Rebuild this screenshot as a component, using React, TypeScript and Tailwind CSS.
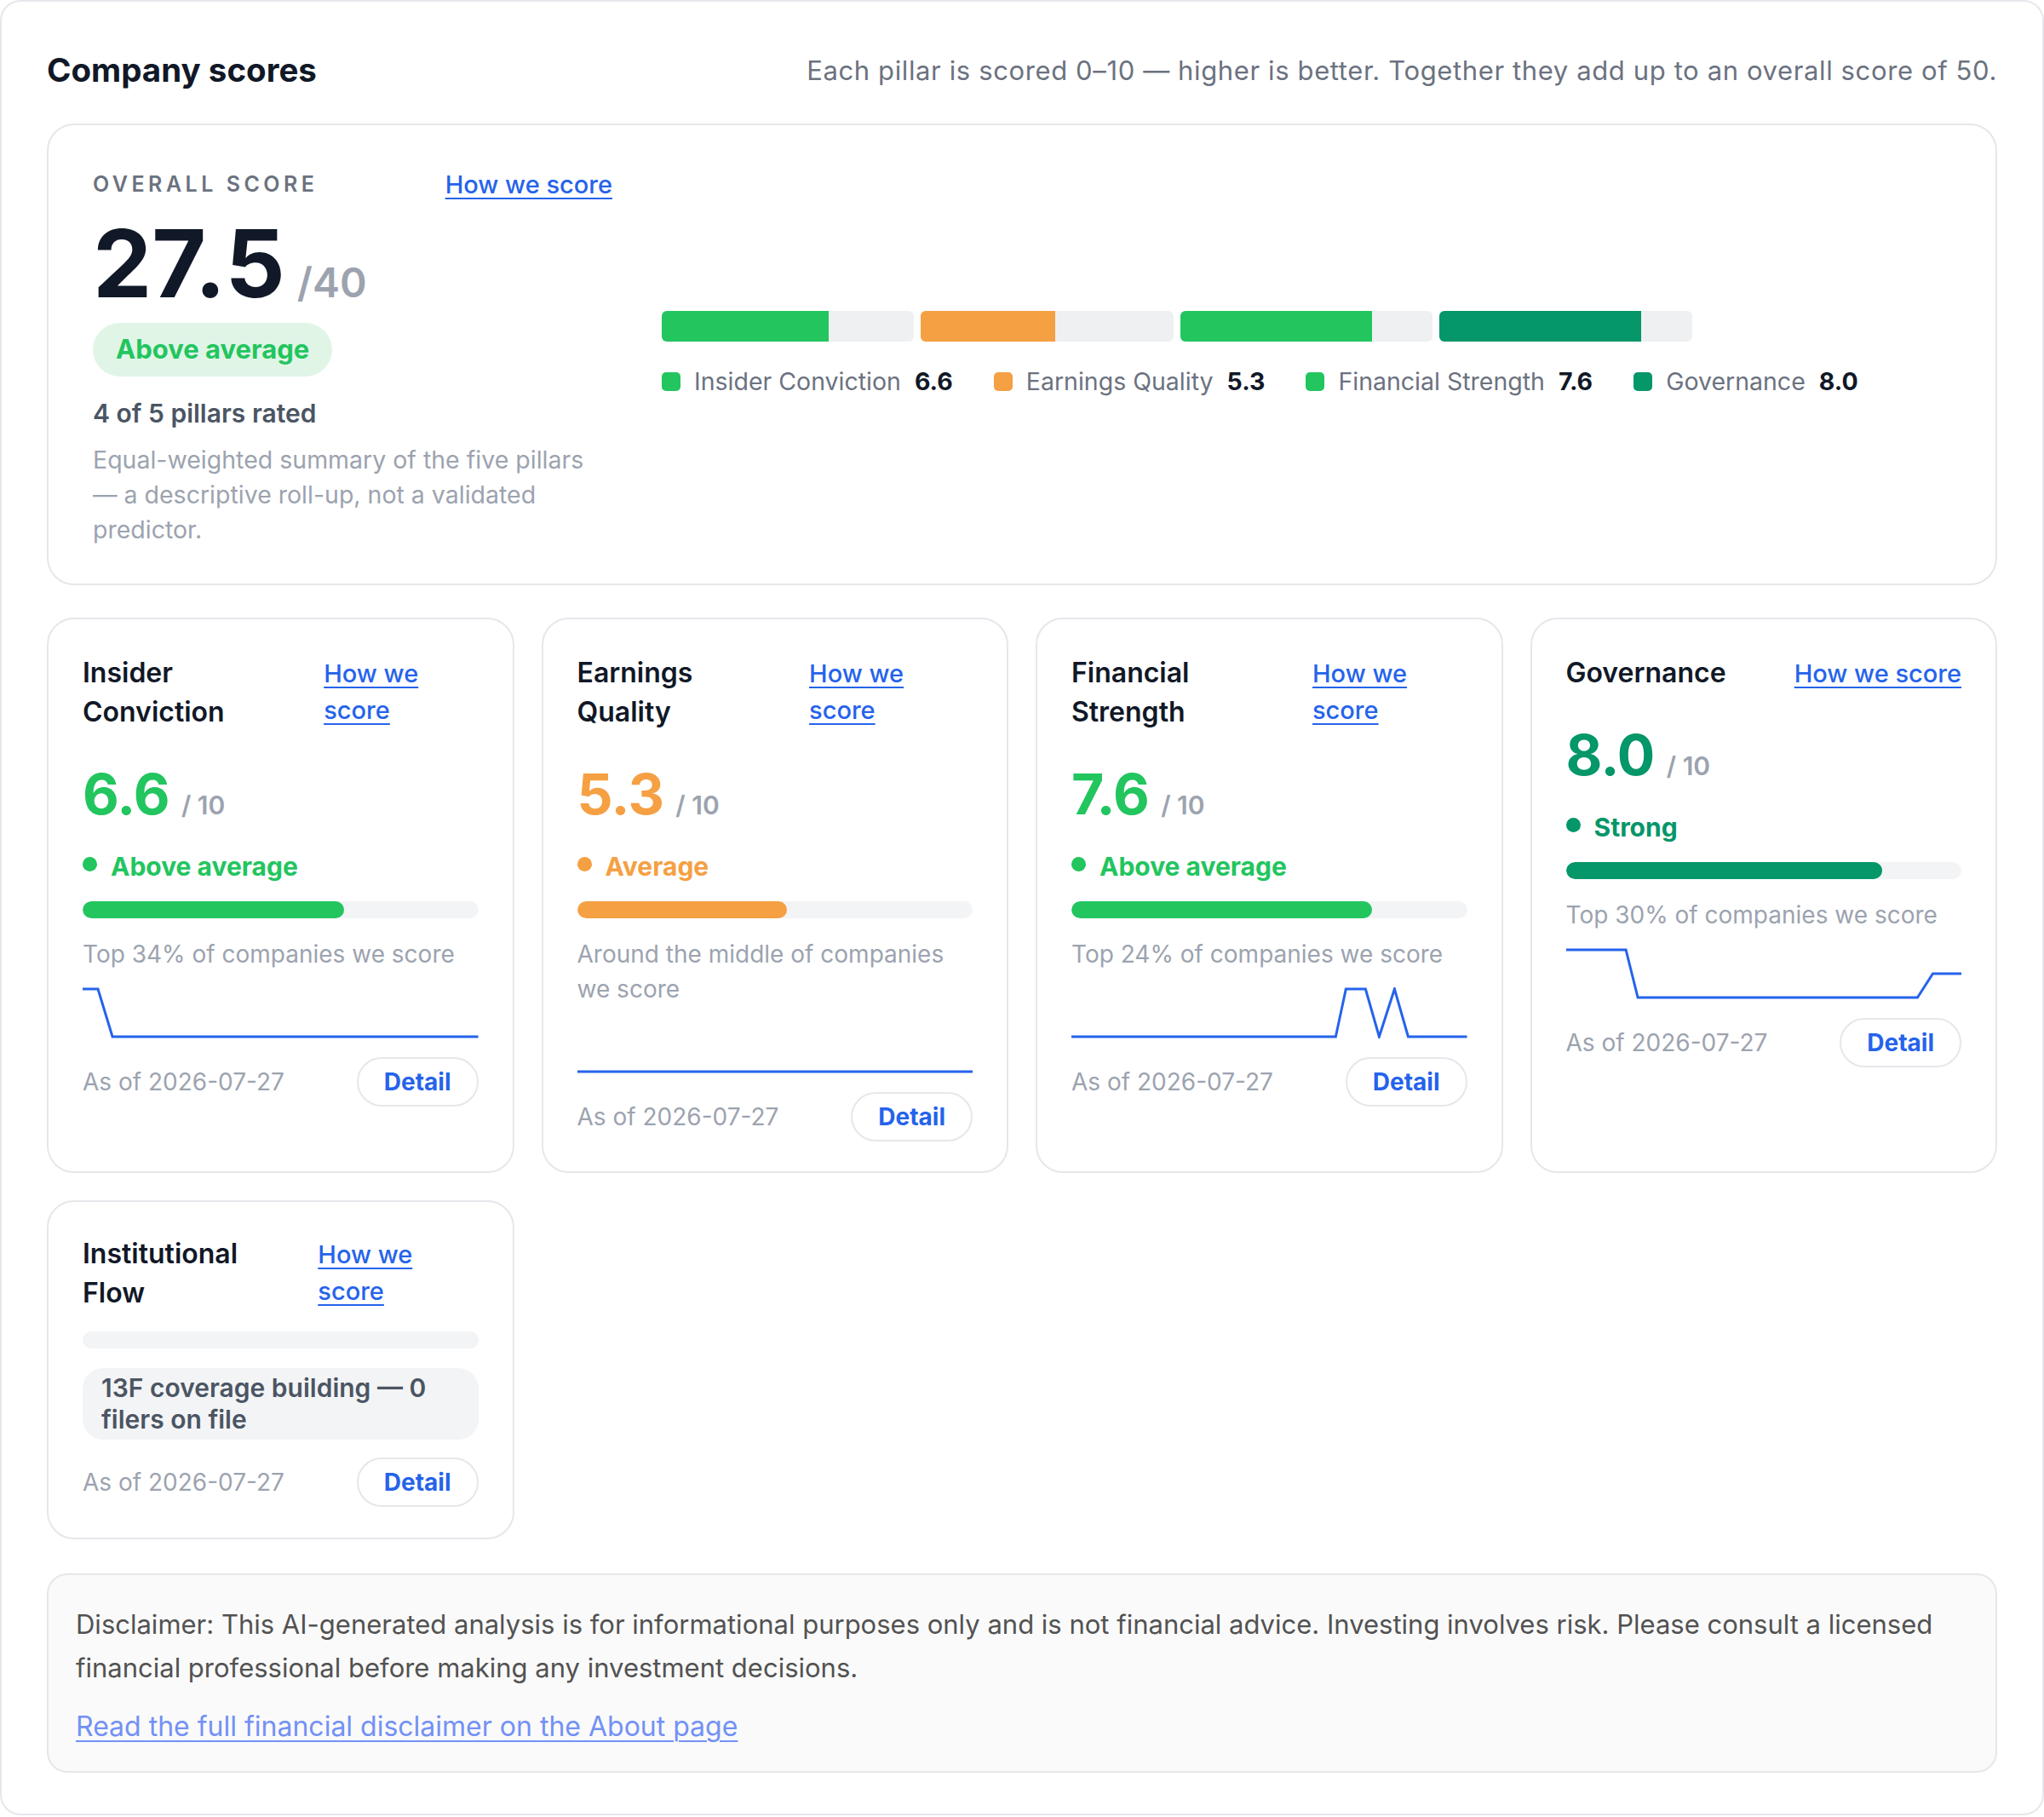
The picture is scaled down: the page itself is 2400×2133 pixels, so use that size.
import React from 'react';

type Pillar = {
  name: string;
  score: string;
  value: number;
  status: string;
  text: string;
  bg: string;
  note: string;
  points: string;
};

const pillars: Pillar[] = [
  {
    name: 'Insider Conviction',
    score: '6.6',
    value: 6.6,
    status: 'Above average',
    text: 'text-[#22c55e]',
    bg: 'bg-[#22c55e]',
    note: 'Top 34% of companies we score',
    points: '0,2 18,2 35,58 464,58',
  },
  {
    name: 'Earnings Quality',
    score: '5.3',
    value: 5.3,
    status: 'Average',
    text: 'text-[#f5a043]',
    bg: 'bg-[#f5a043]',
    note: 'Around the middle of companies we score',
    points: '0,58 464,58',
  },
  {
    name: 'Financial Strength',
    score: '7.6',
    value: 7.6,
    status: 'Above average',
    text: 'text-[#22c55e]',
    bg: 'bg-[#22c55e]',
    note: 'Top 24% of companies we score',
    points: '0,58 310,58 322,2 345,2 361,58 379,2 395,58 464,58',
  },
  {
    name: 'Governance',
    score: '8.0',
    value: 8.0,
    status: 'Strong',
    text: 'text-[#059669]',
    bg: 'bg-[#059669]',
    note: 'Top 30% of companies we score',
    points: '0,2 70,2 84,58 412,58 430,30 464,30',
  },
];

const HowWeScore = () => (
  <a
    href="#"
    className="mt-[2px] text-[29px] font-medium leading-[43px] text-[#2563eb] underline decoration-[2px] underline-offset-[5px]"
  >
    How we score
  </a>
);

const CardFooter = () => (
  <div className="flex items-center justify-between">
    <span className="text-[28px] text-[#9ca3af]">As of 2026-07-27</span>
    <button className="rounded-full border-2 border-[#e5e7eb] bg-white px-[30px] py-[7px] text-[28px] font-bold leading-[40px] text-[#2563eb]">
      Detail
    </button>
  </div>
);

const PillarCard = ({ p }: { p: Pillar }) => (
  <div className="flex flex-col rounded-[32px] border-2 border-[#e5e7eb] bg-white px-[40px] pb-[35px] pt-[40px]">
    <div className="flex items-start justify-between gap-[24px]">
      <h3 className="text-[32px] font-semibold leading-[46px] text-[#111827]">{p.name}</h3>
      <HowWeScore />
    </div>

    <div className="mt-[40px] flex items-baseline gap-[14px]">
      <span className={`text-[66px] font-bold leading-none tracking-[-0.01em] ${p.text}`}>{p.score}</span>
      <span className="text-[30px] font-semibold text-[#9ca3af]">/ 10</span>
    </div>

    <div className="mt-[28px] flex h-[42px] items-center gap-[16px]">
      <span className={`h-[17px] w-[17px] -translate-y-[3px] rounded-full ${p.bg}`} />
      <span className={`text-[30px] font-bold ${p.text}`}>{p.status}</span>
    </div>

    <div className="mt-[20px] h-[20px] overflow-hidden rounded-full bg-[#f3f4f6]">
      <div className={`h-full rounded-full ${p.bg}`} style={{ width: `${p.value * 10}%` }} />
    </div>

    <p className="mt-[22px] text-[28px] leading-[41px] text-[#9ca3af]">{p.note}</p>

    <svg className="mt-[18px] h-[60px] w-full" viewBox="0 0 464 60" preserveAspectRatio="none">
      <polyline
        points={p.points}
        fill="none"
        stroke="#2563eb"
        strokeWidth={3}
        vectorEffect="non-scaling-stroke"
      />
    </svg>

    <div className="mt-[22px]">
      <CardFooter />
    </div>
  </div>
);

const App = () => {
  return (
    <div className="min-h-screen bg-white font-[Inter,sans-serif]">
      <div className="flex flex-col rounded-[24px] border-2 border-[#e5e7eb] bg-white px-[53px] pb-[48px] pt-[52px]">
        {/* header */}
        <div className="flex h-[58px] items-center justify-between">
          <h2 className="text-[38.5px] font-bold text-[#111827]">Company scores</h2>
          <p className="text-[31px] tracking-[0.02em] text-[#6b7280]">
            Each pillar is scored 0–10 — higher is better. Together they add up to an overall score of 50.
          </p>
        </div>

        {/* overall */}
        <div className="mt-[33px] flex items-center gap-[58px] rounded-[32px] border-2 border-[#e5e7eb] bg-white pb-[43px] pl-[52px] pr-[52px] pt-[50px]">
          <div className="flex w-[610px] shrink-0 flex-col">
            <div className="flex h-[40px] items-center justify-between">
              <span className="text-[25px] font-semibold tracking-[0.18em] text-[#6b7280]">OVERALL SCORE</span>
              <a
                href="#"
                className="text-[29px] font-medium text-[#2563eb] underline decoration-[2px] underline-offset-[5px]"
              >
                How we score
              </a>
            </div>
            <div className="mt-[17px] flex items-baseline gap-[14px]">
              <span className="text-[110px] font-bold leading-none text-[#111827]">27.5</span>
              <span className="text-[48px] font-semibold leading-none text-[#9ca3af]">/40</span>
            </div>
            <span className="mt-[15px] flex h-[63px] items-center self-start rounded-full bg-[#e1f5e7] px-[27px] text-[31px] font-bold text-[#22c55e]">
              Above average
            </span>
            <p className="mt-[23px] text-[30px] font-semibold leading-[40px] text-[#4b5563]">4 of 5 pillars rated</p>
            <p className="mt-[14px] max-w-[600px] text-[28.5px] leading-[41px] text-[#9ca3af]">
              Equal-weighted summary of the five pillars — a descriptive roll-up, not a validated predictor.
            </p>
          </div>

          <div className="flex flex-1 flex-col gap-[27px] pb-[6px]">
            <div className="flex h-[36px] gap-[8px]">
              {pillars.map((p) => (
                <div key={p.name} className="flex-1 overflow-hidden rounded-[6px] bg-[#eff0f2]">
                  <div className={`h-full ${p.bg}`} style={{ width: `${p.value * 10}%` }} />
                </div>
              ))}
              <div className="flex-1" />
            </div>
            <div className="flex items-center gap-[48px] leading-[40px]">
              {pillars.map((p) => (
                <div key={p.name} className="flex items-center gap-[16px]">
                  <span className={`h-[22px] w-[22px] rounded-[5px] ${p.bg}`} />
                  <span className="text-[28.5px] text-[#6b7280]">{p.name}</span>
                  <span className="text-[28.5px] font-bold text-[#111827]">{p.score}</span>
                </div>
              ))}
            </div>
          </div>
        </div>

        {/* pillars */}
        <div className="mt-[38px] grid grid-cols-4 gap-x-[32px] gap-y-[32px]">
          {pillars.map((p) => (
            <PillarCard key={p.name} p={p} />
          ))}

          <div className="flex flex-col rounded-[32px] border-2 border-[#e5e7eb] bg-white px-[40px] pb-[36px] pt-[38px]">
            <div className="flex items-start justify-between gap-[24px]">
              <h3 className="text-[32px] font-semibold leading-[46px] text-[#111827]">Institutional Flow</h3>
              <HowWeScore />
            </div>
            <div className="mt-[22px] h-[20px] rounded-full bg-[#f3f4f6]" />
            <div className="mt-[23px] rounded-[24px] bg-[#f3f4f6] px-[22px] py-[5px] text-[30px] font-semibold leading-[37px] text-[#4b5563]">
              13F coverage building — 0 filers on file
            </div>
            <div className="mt-[21px]">
              <CardFooter />
            </div>
          </div>
        </div>

        {/* disclaimer */}
        <div className="mt-[40px] rounded-[24px] border-2 border-[#e5e7eb] bg-[#fafafa] px-[32px] pb-[30px] pt-[32px]">
          <p className="text-[31px] leading-[51px] text-[#525252]">
            Disclaimer: This AI-generated analysis is for informational purposes only and is not financial advice.
            Investing involves risk. Please consult a licensed financial professional before making any investment
            decisions.
          </p>
          <a
            href="#"
            className="mt-[22px] inline-block text-[32px] leading-[44px] text-[#7391f5] underline decoration-[2px] underline-offset-[5px]"
          >
            Read the full financial disclaimer on the About page
          </a>
        </div>
      </div>
    </div>
  );
};

export default App;
